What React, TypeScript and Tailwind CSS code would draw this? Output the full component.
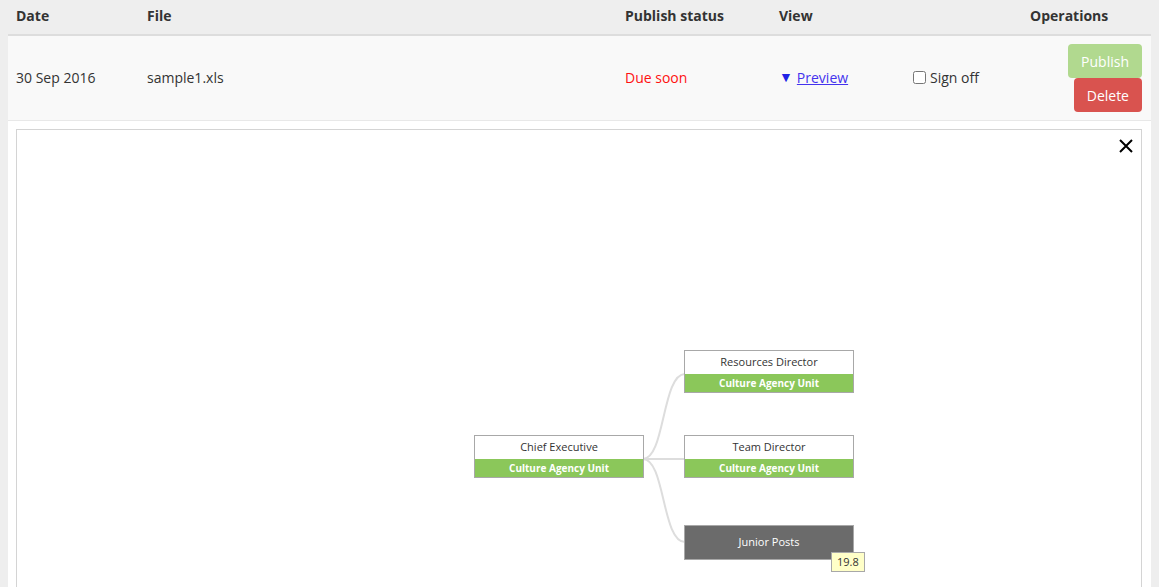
import React from 'react'

const FONT = "font-['Open_Sans',_'Liberation_Sans',_sans-serif]"

function Node({ left, top, title }: { left: number; top: number; title: string }) {
  return (
    <div className="absolute w-[170px] border border-[#a8a8a8] bg-white" style={{ left, top }}>
      <div className="h-[23px] flex items-center justify-center text-[11px] text-[#333]">{title}</div>
      <div className="h-[18px] flex items-center justify-center bg-[#8bc75a] text-[10px] font-bold text-white">
        Culture Agency Unit
      </div>
    </div>
  )
}

export default function App() {
  return (
    <div className={`min-h-[587px] bg-[#eeeeee] px-2 ${FONT} text-[14px] text-[#333]`}>
      {/* Header */}
      <div className="grid grid-cols-[131px_478px_154px_134px_117px_1fr] h-[36px] pb-[3px] border-b-2 border-[#dddddd] font-bold">
        <div className="px-2 flex items-center">Date</div>
        <div className="px-2 flex items-center">File</div>
        <div className="px-2 flex items-center">Publish status</div>
        <div className="px-2 flex items-center">View</div>
        <div />
        <div className="px-2 flex items-center">Operations</div>
      </div>

      {/* Row */}
      <div className="grid grid-cols-[131px_478px_154px_134px_117px_1fr] h-[85px] bg-[#f9f9f9] border-b border-[#e8e8e8]">
        <div className="px-2 pb-[2px] flex items-center">30 Sep 2016</div>
        <div className="px-2 pb-[2px] flex items-center">sample1.xls</div>
        <div className="px-2 pb-[2px] flex items-center text-[#ff1111]">Due soon</div>
        <div className="px-2 pb-[2px] flex items-center gap-[4px]">
          <span className="text-[14px] leading-none text-[#2222e6]">▼</span>
          <a href="#" className="text-[#4433ee] underline">Preview</a>
        </div>
        <div className="px-2 pb-[2px] flex items-center gap-1">
          <input type="checkbox" className="w-[13px] h-[13px]" />
          <span>Sign off</span>
        </div>
        <div className="pl-2 pr-[9px] flex flex-col items-end justify-center">
          <button type="button" className="h-[34px] px-[13px] rounded bg-[#b1d98f] text-white text-[14px]">Publish</button>
          <button type="button" className="h-[34px] px-[13px] rounded bg-[#d9534f] text-white text-[14px]">Delete</button>
        </div>
      </div>

      {/* Preview panel */}
      <div className="bg-white p-2 pr-[9px]">
        <div className="relative h-[480px] border border-[#d4d4d4]">
          <button type="button" className="absolute right-[7px] top-[8px] text-black">
            <svg width="16" height="16" viewBox="0 0 16 16" fill="none" stroke="currentColor" strokeWidth="2">
              <path d="M2 2L14 14M14 2L2 14" />
            </svg>
          </button>

          <svg className="absolute left-0 top-0" width="1124" height="480" fill="none" stroke="#dddddd" strokeWidth="2">
            <path d="M626 329 C648 329 645 244 668 244" />
            <path d="M626 329 L668 329" />
            <path d="M626 329 C648 329 645 412 668 412" />
          </svg>

          <Node left={457} top={305} title="Chief Executive" />
          <Node left={667} top={220} title="Resources Director" />
          <Node left={667} top={305} title="Team Director" />

          <div className="absolute left-[667px] top-[395px] w-[170px] h-[35px] border border-[#a8a8a8] bg-[#6b6b6b] flex items-center justify-center text-[11px] text-white">
            Junior Posts
          </div>
          <div className="absolute left-[814px] top-[422px] h-[20px] px-[5px] border border-[#a8a8a8] bg-[#ffffc8] flex items-center text-[11px] text-[#333]">
            19.8
          </div>
        </div>
      </div>
    </div>
  )
}
